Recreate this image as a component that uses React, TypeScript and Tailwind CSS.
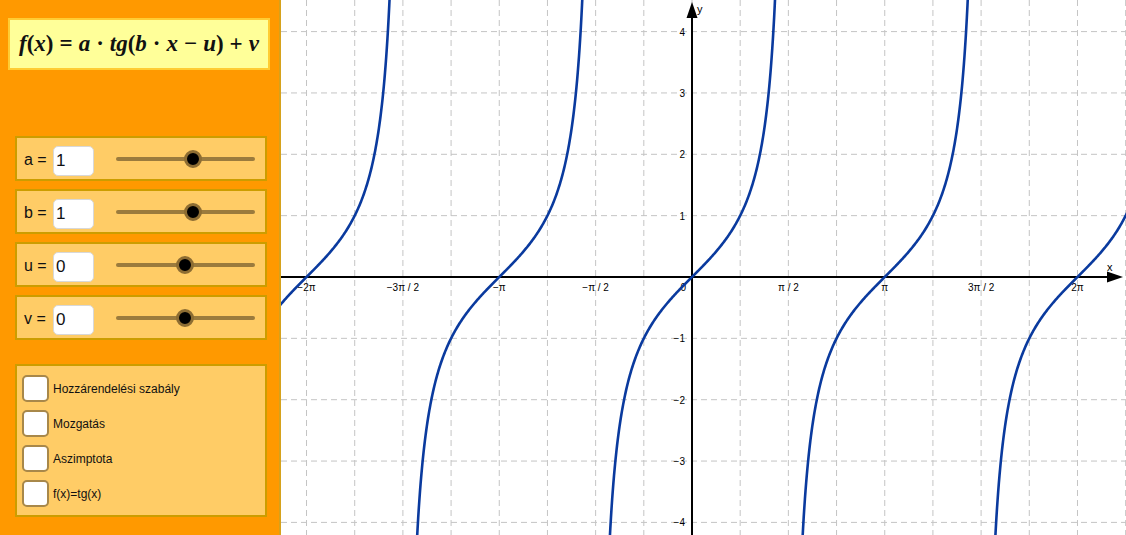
import React from "react";

const OX = 692;
const OY = 277;
const U = 61.35;
const PI = Math.PI;

function branchPath(k: number): string {
  const pts: string[] = [];
  const lim = Math.atan(4.7);
  for (let s = -lim; s <= lim + 1e-9; s += 0.01) {
    const x = OX + (k * PI + s) * U;
    const y = OY - Math.tan(s) * U;
    pts.push(`${x.toFixed(2)},${y.toFixed(2)}`);
  }
  return "M" + pts.join(" L");
}

const xLabels: { x: number; t: string }[] = [
  { x: -2 * PI, t: "−2π" },
  { x: -1.5 * PI, t: "−3π / 2" },
  { x: -PI, t: "−π" },
  { x: -0.5 * PI, t: "−π / 2" },
  { x: 0.5 * PI, t: "π / 2" },
  { x: PI, t: "π" },
  { x: 1.5 * PI, t: "3π / 2" },
  { x: 2 * PI, t: "2π" },
];

const yLabels = [4, 3, 2, 1, -1, -2, -3, -4];

function Graph() {
  const vgrid: number[] = [];
  for (let k = -9; k <= 9; k++) vgrid.push(OX + (k * PI * U) / 4);
  const hgrid: number[] = [];
  for (let k = -5; k <= 5; k++) if (k !== 0) hgrid.push(OY - k * U);
  return (
    <svg
      className="flex-1 h-full block"
      viewBox="281 0 845 535"
      width={845}
      height={535}
      style={{ fontFamily: '"Liberation Sans", Arial, sans-serif' }}
    >
      <rect x={281} y={0} width={845} height={535} fill="#ffffff" />
      {vgrid.map((x, i) => (
        <line key={"v" + i} x1={x} y1={0} x2={x} y2={535} stroke="#c4c4c4" strokeWidth={1} strokeDasharray="6 4" />
      ))}
      {hgrid.map((y, i) => (
        <line key={"h" + i} x1={281} y1={y} x2={1126} y2={y} stroke="#c4c4c4" strokeWidth={1} strokeDasharray="6 4" />
      ))}
      <line x1={281} y1={OY} x2={1110} y2={OY} stroke="#000" strokeWidth={2} />
      <polygon points={`1123,${OY} 1107,${OY - 5.5} 1107,${OY + 5.5}`} fill="#000" />
      <line x1={OX} y1={535} x2={OX} y2={14} stroke="#000" strokeWidth={2} />
      <polygon points={`${OX},2 ${OX - 5.5},18 ${OX + 5.5},18`} fill="#000" />
      <text x={1107} y={271} fontSize={11} fill="#000">x</text>
      <text x={697} y={13} fontSize={11} fill="#000">y</text>
      {xLabels.map((l, i) => (
        <text key={i} x={OX + l.x * U} y={291} fontSize={10} textAnchor="middle" fill="#000">
          {l.t}
        </text>
      ))}
      <text x={686} y={291} fontSize={10} textAnchor="end" fill="#000">0</text>
      {yLabels.map((v, i) => (
        <text key={i} x={685} y={OY - v * U + 4} fontSize={10} textAnchor="end" fill="#000">
          {v < 0 ? "−" + Math.abs(v) : v}
        </text>
      ))}
      {[-3, -2, -1, 0, 1, 2, 3].map((k) => (
        <path key={k} d={branchPath(k)} fill="none" stroke="#0a3a9e" strokeWidth={2.6} strokeLinejoin="round" />
      ))}
    </svg>
  );
}

function SliderRow({ label, value, knob }: { label: string; value: string; knob: number }) {
  return (
    <div className="w-[252px] h-[45px] border-2 border-[#cc9d00] bg-[#ffcc66] flex items-center pt-[4px] pl-[7px]">
      <span className="text-[16px] text-[#111] w-[29px] -mt-[2px]">{label} =</span>
      <div className="w-[41px] h-[30px] bg-white rounded-[5px] border border-[#d8d8d8] flex items-center pl-[2px] text-[17px] text-[#111]">
        {value}
      </div>
      <div className="relative ml-[22px] w-[139px] h-[4px] bg-[#9b7b3d] rounded-full -mt-[3px]">
        <div
          className="absolute top-1/2 w-[18px] h-[18px] -translate-x-1/2 -translate-y-1/2 rounded-full bg-black border-[3px] border-[#8d6d33]"
          style={{ left: knob }}
        />
      </div>
    </div>
  );
}

function CheckRow({ label }: { label: string }) {
  return (
    <div className="flex items-center h-[27px]">
      <div className="w-[27px] h-[27px] bg-white rounded-[5px] border-2 border-[#a8884a]" />
      <span className="ml-[4px] text-[12px] text-[#111]">{label}</span>
    </div>
  );
}

function Op({ c }: { c: string }) {
  return <span className="mx-[6px] not-italic">{c}</span>;
}

export default function App() {
  return (
    <div
      className="flex w-[1126px] h-[535px] overflow-hidden bg-white"
      style={{ fontFamily: '"Liberation Sans", Arial, sans-serif' }}
    >
      <div className="w-[281px] h-full bg-[#ff9900] border-r-2 border-[#d6a21c] shrink-0 flex flex-col">
        <div className="ml-[8px] mt-[18px] w-[262px] h-[52px] bg-[#ffff99] border-2 border-[#ffcc33] flex items-center pl-[9px]">
          <span
            className="text-[23px] font-bold text-[#111] whitespace-nowrap"
            style={{ fontFamily: '"Liberation Serif", "Times New Roman", serif' }}
          >
            <i>f</i>(<i>x</i>)<Op c="=" /><i>a</i><Op c="·" /><i>tg</i>(<i>b</i><Op c="·" /><i>x</i>
            <Op c="−" /><i>u</i>)<Op c="+" /><i>v</i>
          </span>
        </div>
        <div className="ml-[15px] mt-[66px] flex flex-col gap-[8px]">
          <SliderRow label="a" value="1" knob={77} />
          <SliderRow label="b" value="1" knob={77} />
          <SliderRow label="u" value="0" knob={69} />
          <SliderRow label="v" value="0" knob={69} />
        </div>
        <div className="ml-[15px] mt-[24px] w-[252px] h-[153px] border-2 border-[#cc9d00] bg-[#ffcc66] pt-[9px] pl-[5px] flex flex-col gap-[8px]">
          <CheckRow label="Hozzárendelési szabály" />
          <CheckRow label="Mozgatás" />
          <CheckRow label="Aszimptota" />
          <CheckRow label="f(x)=tg(x)" />
        </div>
      </div>
      <Graph />
    </div>
  );
}
